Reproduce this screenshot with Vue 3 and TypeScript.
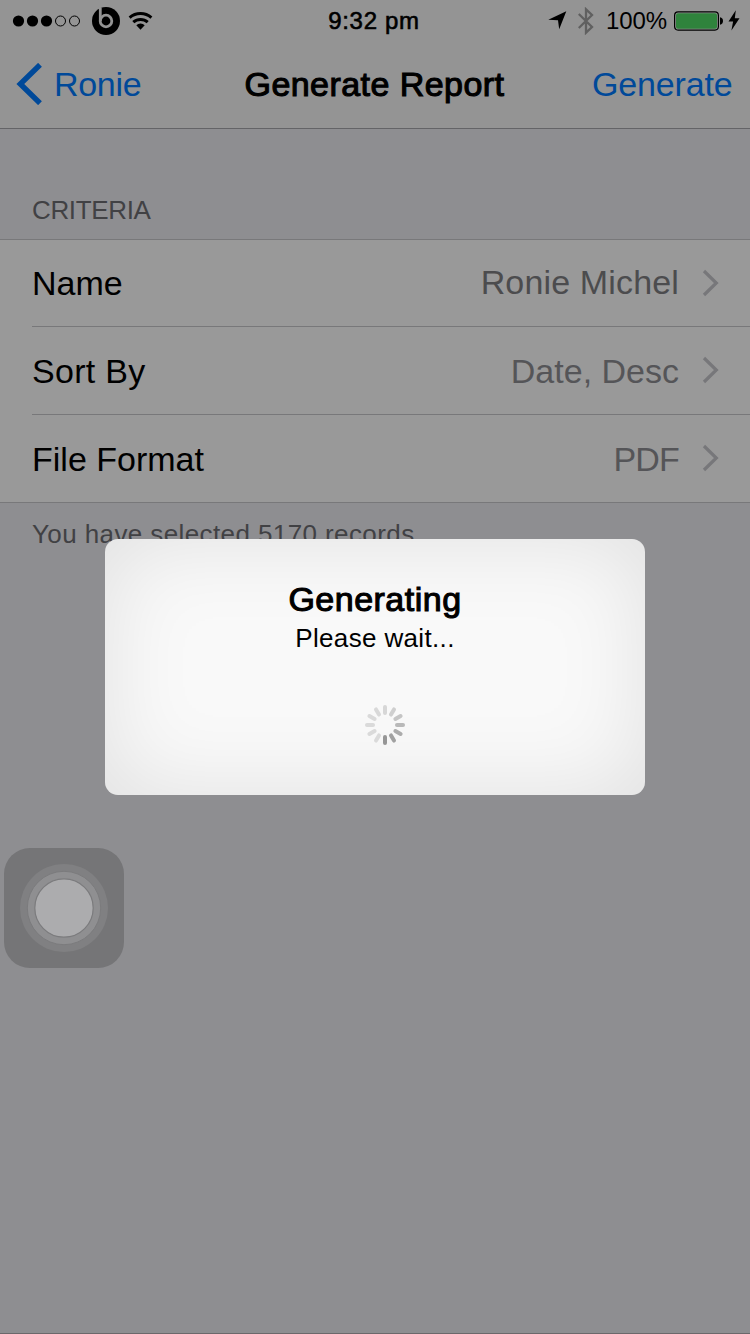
<script setup lang="ts">
interface Criterion {
  label: string
  value: string
  id: string
}

const criteria: Criterion[] = [
  { id: 'name', label: 'Name', value: 'Ronie Michel' },
  { id: 'sort', label: 'Sort By', value: 'Date, Desc' },
  { id: 'format', label: 'File Format', value: 'PDF' },
]

// Spoke colours clockwise from twelve o'clock
const spokes: string[] = [
  '#d7d7d7', '#cfcfcf', '#c5c5c5', '#b9b9b9', '#acacac', '#a1a1a1',
  '#969696', '#dadada', '#dadada', '#dadada', '#dadada', '#d9d9d9',
]
</script>

<template>
  <div class="screen">
    <header class="top">
      <div class="status">
        <div class="status-left">
          <svg class="signal" width="70" height="14" viewBox="0 0 70 14">
            <circle cx="6.5" cy="7" r="5.6" />
            <circle cx="20.5" cy="7" r="5.6" />
            <circle cx="34.5" cy="7" r="5.6" />
            <circle class="ring" cx="48.5" cy="7" r="5" />
            <circle class="ring" cx="62.5" cy="7" r="5" />
          </svg>
          <svg class="beats" width="28" height="28" viewBox="0 0 28 28">
            <circle cx="14" cy="14" r="14" />
            <path d="M8.3 .8V14" class="cut" />
            <circle class="cut" cx="14" cy="14" r="5.8" />
          </svg>
          <svg class="wifi" width="26" height="20" viewBox="0 0 26 20">
            <path class="arc" d="M1.6 6.6Q6.3 2.6 12.5 2.6T23.4 6.6" />
            <path class="arc" d="M5.3 11.200Q8.300 8.400 12.500 8.400T19.700 11.200" />
            <path d="M8.300 14.200Q10 12.600 12.500 12.600T16.700 14.200L12.500 18.800Z" />
          </svg>
        </div>
        <div class="clock">9:32 pm</div>
        <div class="status-right">
          <svg class="location" width="19" height="19" viewBox="0 0 19 19">
            <path d="M.3 8.800L18.300 .2L11.200 18.300L10 9.300Z" />
          </svg>
          <svg class="bluetooth" width="17" height="28" viewBox="0 0 17 28">
            <path d="M.8 7L14 20L8 25.700V2.300L14 8L.8 21" />
          </svg>
          <span class="percent">100%</span>
          <svg class="battery" width="49" height="20" viewBox="0 0 49 20">
            <rect class="shell" x=".6" y=".9" width="43.800" height="18.200" rx="3.500" />
            <rect class="charge" x="2" y="2.300" width="41" height="15.400" rx="2" />
            <path d="M46 6.300Q49 7 49 10T46 13.700Z" />
          </svg>
          <svg class="bolt" width="12" height="21" viewBox="0 0 12 21">
            <path d="M7.800 .3L.5 11.600H5.100L3.400 20.400L11.500 8.300H6.800Z" />
          </svg>
        </div>
      </div>
      <nav class="bar">
        <a class="back">
          <svg width="27" height="42" viewBox="0 0 27 42">
            <path d="M24 1.800L4.300 21L24 40.200" />
          </svg>
          <span>Ronie</span>
        </a>
        <h1>Generate Report</h1>
        <a class="action">Generate</a>
      </nav>
    </header>

    <main>
      <h2>CRITERIA</h2>
      <ul class="list">
        <li v-for="item in criteria" :key="item.id" :class="['row', item.id]">
          <span class="label">{{ item.label }}</span>
          <span class="value">{{ item.value }}</span>
          <svg class="chevron" width="18" height="28" viewBox="0 0 18 28">
            <path d="M2 2L14.300 14L2 26" />
          </svg>
        </li>
      </ul>
      <p class="note">You have selected 5170 records.</p>
    </main>

    <div class="dialog">
      <div class="dialog-title">Generating</div>
      <div class="dialog-text">Please wait...</div>
      <svg class="spinner" width="40" height="40" viewBox="-20 -20 40 40">
        <line
          v-for="(color, i) in spokes"
          :key="i"
          x1="0"
          y1="-18"
          x2="0"
          y2="-12"
          :stroke="color"
          :transform="`rotate(${i * 30})`"
        />
      </svg>
    </div>

    <div class="assistive">
      <svg width="120" height="120" viewBox="0 0 120 120">
        <circle cx="60" cy="60" r="44" fill="#808082" />
        <circle cx="60" cy="60" r="36.700" fill="#8f8f91" stroke="#7b7b7d" stroke-width="1" />
        <circle cx="60" cy="60" r="29.200" fill="#acacae" stroke="#7b7b7d" stroke-width="1.200" />
      </svg>
    </div>
  </div>
</template>

<style>
body {
  margin: 0;
  background: #8e8e91;
}
</style>

<style scoped>
.screen {
  position: relative;
  box-sizing: border-box;
  width: 750px;
  height: 1334px;
  overflow: hidden;
  background: #8e8e91;
  border-bottom: 1px solid #6b686b;
  font-family: "Liberation Sans", Arial, sans-serif;
  font-size: 34px;
  color: #000;
}
svg {
  display: block;
  flex: none;
}
.top {
  height: 128px;
  background: #949494;
  border-bottom: 1px solid #646467;
}
.status {
  display: grid;
  grid-template-columns: 1fr auto 1fr;
  height: 40px;
  font-size: 24px;
  line-height: 41px;
}
.status-left,
.status-right {
  display: flex;
  align-items: center;
}
.status-left {
  padding-left: 12px;
}
.status-right {
  justify-content: flex-end;
  padding-right: 10px;
}
.ring {
  fill: none;
  stroke: #000;
  stroke-width: 1;
}
.beats {
  margin-left: 10px;
}
.cut {
  fill: none;
  stroke: #949494;
  stroke-width: 2.8;
}
.wifi {
  margin-left: 8px;
}
.arc {
  fill: none;
  stroke: #000;
  stroke-width: 3;
}
.clock {
  margin-right: 2px;
  letter-spacing: 0.7px;
  -webkit-text-stroke: 0.6px #000;
}
.location {
  margin-right: 11px;
}
.bluetooth {
  margin-right: 11px;
}
.bluetooth path {
  fill: none;
  stroke: #606060;
  stroke-width: 2.3;
}
.percent {
  margin-right: 7px;
  letter-spacing: -0.1px;
}
.shell {
  fill: none;
  stroke: #000;
  stroke-width: 1.200;
}
.charge {
  fill: #2f833c;
}
.bolt {
  margin-left: 5px;
}
.bar {
  display: grid;
  grid-template-columns: 1fr auto 1fr;
  align-items: center;
  height: 88px;
  line-height: 88px;
}
.back {
  display: flex;
  align-items: center;
  gap: 11px;
  padding-left: 16px;
  color: #004999;
}
.back path {
  fill: none;
  stroke: #004999;
  stroke-width: 5.4;
}
.back span {
  letter-spacing: -0.3px;
}
h1 {
  margin: 0 1px 0 0;
  font-size: 34px;
  font-weight: 400;
  letter-spacing: 0.45px;
  -webkit-text-stroke: 1.100px #000;
}
.action {
  padding-right: 17.5px;
  letter-spacing: -0.15px;
  text-align: right;
  color: #004999;
}
h2 {
  margin: 0;
  padding: 62px 0 0 32px;
  height: 48px;
  font-size: 26px;
  font-weight: 400;
  line-height: 39px;
  letter-spacing: -0.350px;
  color: #414144;
}
.list {
  margin: 0;
  padding: 0;
  list-style: none;
  background: #999;
  border-top: 1px solid #78787a;
  border-bottom: 1px solid #78787a;
}
.row {
  display: flex;
  align-items: center;
  height: 87px;
  margin-left: 32px;
  padding-right: 30px;
  line-height: 44px;
}
.row + .row {
  border-top: 1px solid #78787a;
}
.row.name {
  height: 86px;
}
.label,
.value {
  margin-top: 1px;
}
.name .label {
  margin-top: 0;
}
.sort .label {
  letter-spacing: 0.3px;
}
.value {
  margin-left: auto;
  margin-right: 23px;
  color: #555558;
}
.name .value {
  margin-top: -2px;
  letter-spacing: 0.15px;
  color: #4c4c4e;
}
.format .value {
  letter-spacing: -0.8px;
}
.chevron {
  margin-top: -1px;
}
.chevron path {
  fill: none;
  stroke: #77777a;
  stroke-width: 3.200;
}
.note {
  margin: 0;
  padding: 14px 0 0 32px;
  font-size: 26px;
  line-height: 34px;
  letter-spacing: 0.400px;
  color: #414144;
}
.dialog {
  position: absolute;
  top: 539px;
  left: 105px;
  box-sizing: border-box;
  width: 540px;
  height: 256px;
  padding-top: 40px;
  border-radius: 13px;
  background: #f9f9f9;
  box-shadow: inset 0 0 90px rgba(0, 0, 0, 0.100);
  text-align: center;
}
.dialog-title {
  line-height: 41px;
  letter-spacing: 0.500px;
  -webkit-text-stroke: 1.100px #000;
}
.dialog-text {
  font-size: 26px;
  line-height: 36px;
  letter-spacing: 0.350px;
}
.spinner {
  margin: 49px 0 0 260px;
}
.spinner line {
  stroke-width: 4;
  stroke-linecap: round;
}
.assistive {
  position: absolute;
  top: 848px;
  left: 4px;
  width: 120px;
  height: 120px;
  border-radius: 26px;
  background: #757577;
}
</style>
